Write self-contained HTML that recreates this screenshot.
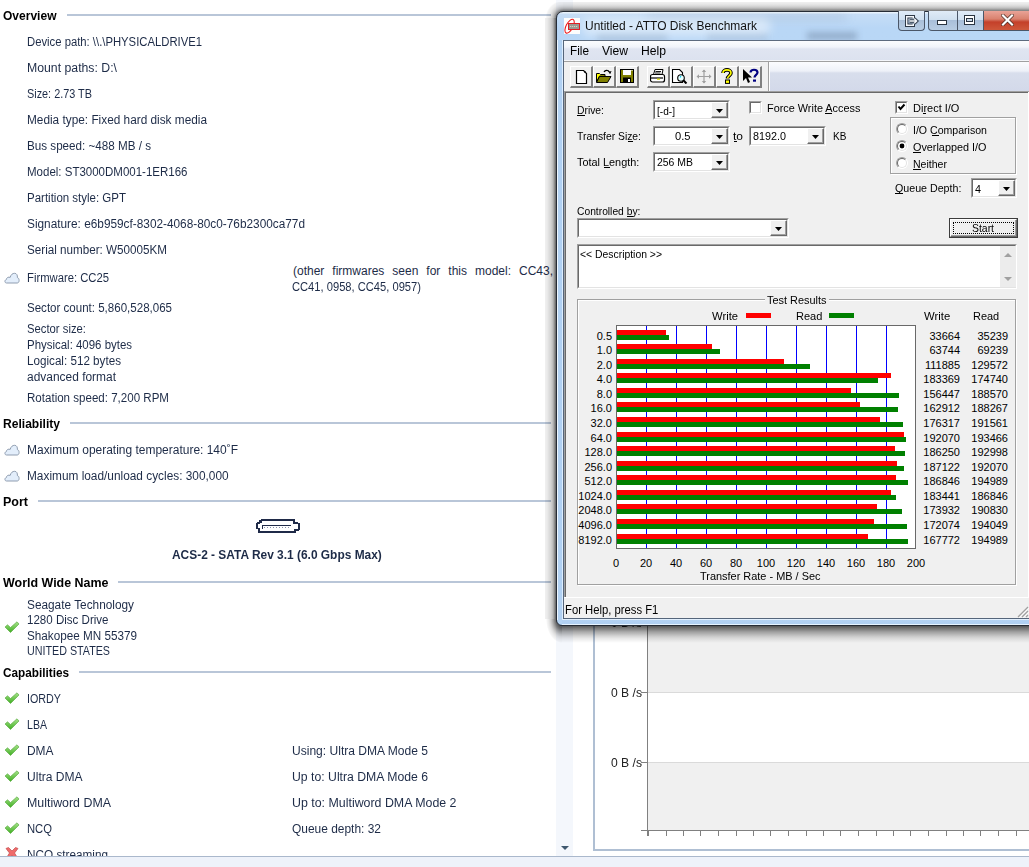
<!DOCTYPE html>
<html><head><meta charset="utf-8">
<style>
html,body{margin:0;padding:0;}
body{width:1029px;height:867px;overflow:hidden;position:relative;background:#fff;font-family:"Liberation Sans",sans-serif;}
.t{position:absolute;white-space:nowrap;font-family:"Liberation Sans",sans-serif;}
.a{position:absolute;}
.hl{position:absolute;height:2px;background:#b9c6d8;}
.combo{position:absolute;background:#fff;border-top:1px solid #a0a0a0;border-left:1px solid #a0a0a0;border-right:1px solid #fff;border-bottom:1px solid #fff;box-sizing:border-box;}
.combo:before{content:"";position:absolute;left:0;top:0;right:0;bottom:0;border-top:1px solid #696969;border-left:1px solid #696969;border-right:1px solid #e3e3e3;border-bottom:1px solid #e3e3e3;}
.dd{position:absolute;top:1px;right:1px;bottom:1px;width:17px;background:#f0f0f0;box-sizing:border-box;border:1px solid;border-color:#fff #696969 #696969 #fff;box-shadow:inset -1px -1px 0 #a0a0a0;}
.dd:after{content:"";position:absolute;left:4px;top:6px;width:7px;height:4px;background:#000;clip-path:polygon(0 0,100% 0,50% 100%);}
.btn{position:absolute;top:66px;width:23px;height:22px;box-sizing:border-box;background:#f0f0f0;border-top:1px solid #fff;border-left:1px solid #fff;border-right:2px solid #808080;border-bottom:2px solid #808080;}
.bar{position:absolute;height:5px;}
.gl{position:absolute;width:1px;background:#0000ff;top:326px;height:222px;}
.radio{position:absolute;width:12px;height:12px;border-radius:50%;box-sizing:border-box;border:1px solid;border-color:#a0a0a0 #fff #fff #a0a0a0;background:#fff;}
.radio:before{content:"";position:absolute;left:0;top:0;right:0;bottom:0;border-radius:50%;border:1px solid;border-color:#696969 #e3e3e3 #e3e3e3 #696969;}
.chk{position:absolute;width:13px;height:13px;box-sizing:border-box;background:#fff;border-top:1px solid #a0a0a0;border-left:1px solid #a0a0a0;border-right:1px solid #fff;border-bottom:1px solid #fff;}
.chk:before{content:"";position:absolute;left:0;top:0;right:0;bottom:0;border-top:1px solid #696969;border-left:1px solid #696969;border-right:1px solid #e3e3e3;border-bottom:1px solid #e3e3e3;}
.ul{position:absolute;height:1px;background:#000;}
</style></head><body>

<!-- ============ LEFT PANEL ============ -->
<div class="hl" style="left:67px;top:14px;width:484px;"></div>
<div class="hl" style="left:70px;top:422px;width:481px;"></div>
<div class="hl" style="left:38px;top:500px;width:513px;"></div>
<div class="hl" style="left:118px;top:581px;width:433px;"></div>
<div class="hl" style="left:79px;top:671px;width:472px;"></div>

<!-- cloud icons -->
<svg class="a" style="left:4px;top:272px" width="16" height="12" viewBox="0 0 16 12"><path d="M2.5 11 C0.6 11 0.3 8.2 2.3 7.6 C2.4 5.6 4.6 4.6 6.2 5.4 C6.8 2.6 8.6 1.3 10.6 1.3 C12.7 1.3 13.6 3.3 13.4 5.6 C15.6 6 15.8 11 13.2 11 Z" fill="#e3eefb" stroke="#8f9db0" stroke-width="1"/></svg>
<svg class="a" style="left:4px;top:444px" width="16" height="12" viewBox="0 0 16 12"><path d="M2.5 11 C0.6 11 0.3 8.2 2.3 7.6 C2.4 5.6 4.6 4.6 6.2 5.4 C6.8 2.6 8.6 1.3 10.6 1.3 C12.7 1.3 13.6 3.3 13.4 5.6 C15.6 6 15.8 11 13.2 11 Z" fill="#e3eefb" stroke="#8f9db0" stroke-width="1"/></svg>
<svg class="a" style="left:4px;top:470px" width="16" height="12" viewBox="0 0 16 12"><path d="M2.5 11 C0.6 11 0.3 8.2 2.3 7.6 C2.4 5.6 4.6 4.6 6.2 5.4 C6.8 2.6 8.6 1.3 10.6 1.3 C12.7 1.3 13.6 3.3 13.4 5.6 C15.6 6 15.8 11 13.2 11 Z" fill="#e3eefb" stroke="#8f9db0" stroke-width="1"/></svg>

<!-- SATA icon -->
<svg class="a" style="left:256px;top:518px" width="46" height="16" viewBox="0 0 46 16" shape-rendering="crispEdges"><g fill="#1f2a48">
<rect x="5" y="1" width="33" height="2"/><rect x="37" y="1" width="2" height="4"/><rect x="37" y="4" width="5" height="2"/><rect x="42" y="5" width="2" height="7"/><rect x="38" y="11" width="5" height="2"/><rect x="38" y="12" width="2" height="3"/>
<rect x="2" y="13" width="38" height="2"/><rect x="2" y="10" width="2" height="5"/><rect x="0" y="5" width="2" height="6"/><rect x="1" y="4" width="3" height="2"/><rect x="3" y="2" width="3" height="3"/>
<rect x="6" y="7" width="29" height="1"/><rect x="6" y="7" width="1" height="4"/></g>
<path d="M8 9.5 H34" stroke="#8890a8" stroke-width="1" stroke-dasharray="1 2"/></svg>

<!-- check icons -->
<svg class="a" style="left:4px;top:621px" width="16" height="13" viewBox="0 0 16 13"><defs><linearGradient id="gck" x1="0" y1="0" x2="0" y2="1"><stop offset="0" stop-color="#a7e48a"/><stop offset="1" stop-color="#3fae22"/></linearGradient></defs><path d="M1 6 L3.5 3.8 L6.5 6.5 L13 0.8 L15 3 L6.5 11.5 Z" fill="url(#gck)" stroke="#52a53a" stroke-width="0.6"/></svg>
<svg class="a" style="left:4px;top:692px" width="16" height="13" viewBox="0 0 16 13"><path d="M1 6 L3.5 3.8 L6.5 6.5 L13 0.8 L15 3 L6.5 11.5 Z" fill="url(#gck)" stroke="#52a53a" stroke-width="0.6"/></svg>
<svg class="a" style="left:4px;top:718px" width="16" height="13" viewBox="0 0 16 13"><path d="M1 6 L3.5 3.8 L6.5 6.5 L13 0.8 L15 3 L6.5 11.5 Z" fill="url(#gck)" stroke="#52a53a" stroke-width="0.6"/></svg>
<svg class="a" style="left:4px;top:744px" width="16" height="13" viewBox="0 0 16 13"><path d="M1 6 L3.5 3.8 L6.5 6.5 L13 0.8 L15 3 L6.5 11.5 Z" fill="url(#gck)" stroke="#52a53a" stroke-width="0.6"/></svg>
<svg class="a" style="left:4px;top:770px" width="16" height="13" viewBox="0 0 16 13"><path d="M1 6 L3.5 3.8 L6.5 6.5 L13 0.8 L15 3 L6.5 11.5 Z" fill="url(#gck)" stroke="#52a53a" stroke-width="0.6"/></svg>
<svg class="a" style="left:4px;top:796px" width="16" height="13" viewBox="0 0 16 13"><path d="M1 6 L3.5 3.8 L6.5 6.5 L13 0.8 L15 3 L6.5 11.5 Z" fill="url(#gck)" stroke="#52a53a" stroke-width="0.6"/></svg>
<svg class="a" style="left:4px;top:822px" width="16" height="13" viewBox="0 0 16 13"><path d="M1 6 L3.5 3.8 L6.5 6.5 L13 0.8 L15 3 L6.5 11.5 Z" fill="url(#gck)" stroke="#52a53a" stroke-width="0.6"/></svg>
<!-- red x -->
<svg class="a" style="left:5px;top:847px" width="14" height="12" viewBox="0 0 14 12"><path d="M1 1.5 L3.5 0.5 L7 4 L10.5 0.5 L13 1.5 L9.5 6 L12 10 L9 11 L7 8 L5 11 L2 10 L4.5 6 Z" fill="#ef6b6b" stroke="#c24b4b" stroke-width="0.7"/></svg>

<!-- scrollbar column -->
<div class="a" style="left:556px;top:0;width:17px;height:856px;background:#f4f7fc;"></div>
<div class="a" style="left:561px;top:846px;width:0;height:0;border-left:4px solid transparent;border-right:4px solid transparent;border-top:4px solid #40596f;"></div>

<!-- graph panel -->
<div class="a" style="left:593px;top:20px;width:2px;height:831px;background:#afbfd3;"></div>
<div class="a" style="left:593px;top:849px;width:436px;height:2px;background:#afbfd3;"></div>
<div class="a" style="left:648px;top:600px;width:381px;height:93px;background:#f0f0f0;"></div>
<div class="a" style="left:648px;top:692px;width:381px;height:1px;background:#dadada;"></div>
<div class="a" style="left:648px;top:762px;width:381px;height:68px;background:#f0f0f0;"></div>
<div class="a" style="left:648px;top:762px;width:381px;height:1px;background:#dadada;"></div>
<div class="a" style="left:647px;top:600px;width:1px;height:236px;background:#808080;"></div>
<div class="a" style="left:641px;top:830px;width:388px;height:1px;background:#808080;"></div>
<div class="a" style="left:641px;top:692px;width:6px;height:1px;background:#808080;"></div>
<div class="a" style="left:641px;top:762px;width:6px;height:1px;background:#808080;"></div>
<div class="a" style="left:641px;top:622px;width:6px;height:1px;background:#808080;"></div>
<div id="ticks"><div class="a" style="left:648px;top:831px;width:1px;height:5px;background:#808080;"></div>
<div class="a" style="left:666px;top:831px;width:1px;height:5px;background:#808080;"></div>
<div class="a" style="left:683px;top:831px;width:1px;height:5px;background:#808080;"></div>
<div class="a" style="left:700px;top:831px;width:1px;height:5px;background:#808080;"></div>
<div class="a" style="left:718px;top:831px;width:1px;height:5px;background:#808080;"></div>
<div class="a" style="left:736px;top:831px;width:1px;height:5px;background:#808080;"></div>
<div class="a" style="left:753px;top:831px;width:1px;height:5px;background:#808080;"></div>
<div class="a" style="left:770px;top:831px;width:1px;height:5px;background:#808080;"></div>
<div class="a" style="left:788px;top:831px;width:1px;height:5px;background:#808080;"></div>
<div class="a" style="left:806px;top:831px;width:1px;height:5px;background:#808080;"></div>
<div class="a" style="left:823px;top:831px;width:1px;height:5px;background:#808080;"></div>
<div class="a" style="left:840px;top:831px;width:1px;height:5px;background:#808080;"></div>
<div class="a" style="left:858px;top:831px;width:1px;height:5px;background:#808080;"></div>
<div class="a" style="left:876px;top:831px;width:1px;height:5px;background:#808080;"></div>
<div class="a" style="left:893px;top:831px;width:1px;height:5px;background:#808080;"></div>
<div class="a" style="left:910px;top:831px;width:1px;height:5px;background:#808080;"></div>
<div class="a" style="left:928px;top:831px;width:1px;height:5px;background:#808080;"></div>
<div class="a" style="left:946px;top:831px;width:1px;height:5px;background:#808080;"></div>
<div class="a" style="left:963px;top:831px;width:1px;height:5px;background:#808080;"></div>
<div class="a" style="left:980px;top:831px;width:1px;height:5px;background:#808080;"></div>
<div class="a" style="left:998px;top:831px;width:1px;height:5px;background:#808080;"></div>
<div class="a" style="left:1016px;top:831px;width:1px;height:5px;background:#808080;"></div></div>

<div class="t" style="top:10px;font-size:12px;line-height:12px;font-weight:bold;color:#000;left:3px;transform:scaleX(1.0023);transform-origin:0 0;">Overview</div>
<div class="t" style="top:36px;font-size:12px;line-height:12px;font-weight:normal;color:#1d2b47;left:27px;transform:scaleX(0.9405);transform-origin:0 0;">Device path: \\.\PHYSICALDRIVE1</div>
<div class="t" style="top:62px;font-size:12px;line-height:12px;font-weight:normal;color:#1d2b47;left:27px;transform:scaleX(1.0222);transform-origin:0 0;">Mount paths: D:\</div>
<div class="t" style="top:88px;font-size:12px;line-height:12px;font-weight:normal;color:#1d2b47;left:27px;transform:scaleX(0.9049);transform-origin:0 0;">Size: 2.73 TB</div>
<div class="t" style="top:114px;font-size:12px;line-height:12px;font-weight:normal;color:#1d2b47;left:27px;transform:scaleX(0.9849);transform-origin:0 0;">Media type: Fixed hard disk media</div>
<div class="t" style="top:140px;font-size:12px;line-height:12px;font-weight:normal;color:#1d2b47;left:27px;transform:scaleX(0.9706);transform-origin:0 0;">Bus speed: ~488 MB / s</div>
<div class="t" style="top:166px;font-size:12px;line-height:12px;font-weight:normal;color:#1d2b47;left:27px;transform:scaleX(0.9586);transform-origin:0 0;">Model: ST3000DM001-1ER166</div>
<div class="t" style="top:192px;font-size:12px;line-height:12px;font-weight:normal;color:#1d2b47;left:27px;transform:scaleX(0.9577);transform-origin:0 0;">Partition style: GPT</div>
<div class="t" style="top:218px;font-size:12px;line-height:12px;font-weight:normal;color:#1d2b47;left:27px;transform:scaleX(0.9850);transform-origin:0 0;">Signature: e6b959cf-8302-4068-80c0-76b2300ca77d</div>
<div class="t" style="top:244px;font-size:12px;line-height:12px;font-weight:normal;color:#1d2b47;left:27px;transform:scaleX(0.9717);transform-origin:0 0;">Serial number: W50005KM</div>
<div class="t" style="top:272px;font-size:12px;line-height:12px;font-weight:normal;color:#1d2b47;left:27px;transform:scaleX(0.9387);transform-origin:0 0;">Firmware: CC25</div>
<div class="t" style="top:265px;font-size:12px;line-height:12px;font-weight:normal;color:#1d2b47;left:293px;width:260px;text-align:justify;text-align-last:justify;">(other firmwares seen for this model: CC43,</div>
<div class="t" style="top:281px;font-size:12px;line-height:12px;font-weight:normal;color:#1d2b47;left:292px;transform:scaleX(0.9297);transform-origin:0 0;">CC41, 0958, CC45, 0957)</div>
<div class="t" style="top:302px;font-size:12px;line-height:12px;font-weight:normal;color:#1d2b47;left:27px;transform:scaleX(0.9617);transform-origin:0 0;">Sector count: 5,860,528,065</div>
<div class="t" style="top:323px;font-size:12px;line-height:12px;font-weight:normal;color:#1d2b47;left:27px;transform:scaleX(0.9409);transform-origin:0 0;">Sector size:</div>
<div class="t" style="top:339px;font-size:12px;line-height:12px;font-weight:normal;color:#1d2b47;left:27px;transform:scaleX(0.9540);transform-origin:0 0;">Physical: 4096 bytes</div>
<div class="t" style="top:355px;font-size:12px;line-height:12px;font-weight:normal;color:#1d2b47;left:27px;transform:scaleX(0.9717);transform-origin:0 0;">Logical: 512 bytes</div>
<div class="t" style="top:371px;font-size:12px;line-height:12px;font-weight:normal;color:#1d2b47;left:27px;transform:scaleX(0.9956);transform-origin:0 0;">advanced format</div>
<div class="t" style="top:392px;font-size:12px;line-height:12px;font-weight:normal;color:#1d2b47;left:27px;transform:scaleX(0.9632);transform-origin:0 0;">Rotation speed: 7,200 RPM</div>
<div class="t" style="top:418px;font-size:12px;line-height:12px;font-weight:bold;color:#000;left:3px;transform:scaleX(1.0055);transform-origin:0 0;">Reliability</div>
<div class="t" style="top:444px;font-size:12px;line-height:12px;font-weight:normal;color:#1d2b47;left:27px;transform:scaleX(0.9979);transform-origin:0 0;">Maximum operating temperature: 140˚F</div>
<div class="t" style="top:470px;font-size:12px;line-height:12px;font-weight:normal;color:#1d2b47;left:27px;transform:scaleX(0.9876);transform-origin:0 0;">Maximum load/unload cycles: 300,000</div>
<div class="t" style="top:496px;font-size:12px;line-height:12px;font-weight:bold;color:#000;left:3px;transform:scaleX(1.0417);transform-origin:0 0;">Port</div>
<div class="t" style="top:549px;font-size:12px;line-height:12px;font-weight:bold;color:#1d2b47;left:172px;transform:scaleX(0.9935);transform-origin:0 0;">ACS-2 - SATA Rev 3.1 (6.0 Gbps Max)</div>
<div class="t" style="top:577px;font-size:12px;line-height:12px;font-weight:bold;color:#000;left:3px;transform:scaleX(1.0375);transform-origin:0 0;">World Wide Name</div>
<div class="t" style="top:599px;font-size:12px;line-height:12px;font-weight:normal;color:#1d2b47;left:27px;transform:scaleX(0.9857);transform-origin:0 0;">Seagate Technology</div>
<div class="t" style="top:614px;font-size:12px;line-height:12px;font-weight:normal;color:#1d2b47;left:27px;transform:scaleX(0.9622);transform-origin:0 0;">1280 Disc Drive</div>
<div class="t" style="top:630px;font-size:12px;line-height:12px;font-weight:normal;color:#1d2b47;left:27px;transform:scaleX(0.9756);transform-origin:0 0;">Shakopee MN 55379</div>
<div class="t" style="top:645px;font-size:12px;line-height:12px;font-weight:normal;color:#1d2b47;left:27px;transform:scaleX(0.8934);transform-origin:0 0;">UNITED STATES</div>
<div class="t" style="top:667px;font-size:12px;line-height:12px;font-weight:bold;color:#000;left:3px;transform:scaleX(0.9798);transform-origin:0 0;">Capabilities</div>
<div class="t" style="top:693px;font-size:12px;line-height:12px;font-weight:normal;color:#1d2b47;left:27px;transform:scaleX(0.8944);transform-origin:0 0;">IORDY</div>
<div class="t" style="top:719px;font-size:12px;line-height:12px;font-weight:normal;color:#1d2b47;left:27px;transform:scaleX(0.8815);transform-origin:0 0;">LBA</div>
<div class="t" style="top:745px;font-size:12px;line-height:12px;font-weight:normal;color:#1d2b47;left:27px;transform:scaleX(0.9936);transform-origin:0 0;">DMA</div>
<div class="t" style="top:771px;font-size:12px;line-height:12px;font-weight:normal;color:#1d2b47;left:27px;transform:scaleX(1.0046);transform-origin:0 0;">Ultra DMA</div>
<div class="t" style="top:797px;font-size:12px;line-height:12px;font-weight:normal;color:#1d2b47;left:27px;transform:scaleX(1.0325);transform-origin:0 0;">Multiword DMA</div>
<div class="t" style="top:823px;font-size:12px;line-height:12px;font-weight:normal;color:#1d2b47;left:27px;transform:scaleX(0.9373);transform-origin:0 0;">NCQ</div>
<div class="t" style="top:849px;font-size:12px;line-height:12px;font-weight:normal;color:#1d2b47;left:27px;transform:scaleX(0.9796);transform-origin:0 0;">NCQ streaming</div>
<div class="t" style="top:745px;font-size:12px;line-height:12px;font-weight:normal;color:#1d2b47;left:292px;transform:scaleX(1.0045);transform-origin:0 0;">Using: Ultra DMA Mode 5</div>
<div class="t" style="top:771px;font-size:12px;line-height:12px;font-weight:normal;color:#1d2b47;left:292px;transform:scaleX(1.0196);transform-origin:0 0;">Up to: Ultra DMA Mode 6</div>
<div class="t" style="top:797px;font-size:12px;line-height:12px;font-weight:normal;color:#1d2b47;left:292px;transform:scaleX(1.0320);transform-origin:0 0;">Up to: Multiword DMA Mode 2</div>
<div class="t" style="top:823px;font-size:12px;line-height:12px;font-weight:normal;color:#1d2b47;left:292px;transform:scaleX(0.9953);transform-origin:0 0;">Queue depth: 32</div>
<div class="t" style="top:687px;font-size:12px;line-height:12px;font-weight:normal;color:#222;left:611px;transform:scaleX(1.0102);transform-origin:0 0;">0 B /s</div>
<div class="t" style="top:757px;font-size:12px;line-height:12px;font-weight:normal;color:#222;left:611px;transform:scaleX(1.0102);transform-origin:0 0;">0 B /s</div>
<div class="t" style="top:617px;font-size:12px;line-height:12px;font-weight:normal;color:#222;left:611px;transform:scaleX(1.0102);transform-origin:0 0;">0 B /s</div>
<!-- bottom bar -->
<div class="a" style="left:0;top:856px;width:1029px;height:1px;background:#aab8cc;"></div>
<div class="a" style="left:0;top:857px;width:1029px;height:10px;background:#eef2fa;"></div>

<!-- ============ ATTO WINDOW ============ -->
<div class="a" style="left:563px;top:2px;width:466px;height:9px;background:linear-gradient(180deg,rgba(0,0,0,.06) 0,rgba(0,0,0,.09) 22%,rgba(0,0,0,.15) 44%,rgba(0,0,0,.25) 67%,rgba(0,0,0,.34) 78%,rgba(0,0,0,.44) 89%,rgba(0,0,0,.5) 100%);"></div>
<div class="a" style="left:545px;top:18px;width:11px;height:601px;background:linear-gradient(90deg,rgba(0,0,0,.06) 0,rgba(0,0,0,.08) 18%,rgba(0,0,0,.18) 55%,rgba(0,0,0,.28) 73%,rgba(0,0,0,.44) 86%,rgba(0,0,0,.56) 95%,rgba(0,0,0,.6) 100%);"></div>
<div class="a" style="left:562px;top:626px;width:467px;height:17px;background:linear-gradient(180deg,rgba(0,0,0,.65) 0,rgba(0,0,0,.53) 12%,rgba(0,0,0,.43) 24%,rgba(0,0,0,.33) 35%,rgba(0,0,0,.25) 47%,rgba(0,0,0,.17) 59%,rgba(0,0,0,.1) 71%,rgba(0,0,0,.06) 82%,rgba(0,0,0,0) 100%);"></div>
<div class="a" style="left:545px;top:2px;width:18px;height:16px;background:radial-gradient(circle at 18px 16px,rgba(0,0,0,.5) 7px,rgba(0,0,0,.42) 8px,rgba(0,0,0,.32) 9px,rgba(0,0,0,.24) 10px,rgba(0,0,0,.14) 12px,rgba(0,0,0,.08) 14px,rgba(0,0,0,.05) 16px,rgba(0,0,0,0) 17.5px);"></div>
<div class="a" style="left:545px;top:619px;width:17px;height:24px;background:radial-gradient(ellipse 16px 24px at 17px 0px,rgba(0,0,0,.62) 0,rgba(0,0,0,.62) 35%,rgba(0,0,0,.5) 45%,rgba(0,0,0,.36) 55%,rgba(0,0,0,.24) 65%,rgba(0,0,0,.14) 75%,rgba(0,0,0,.08) 85%,rgba(0,0,0,.04) 94%,rgba(0,0,0,0) 100%);"></div>
<div class="a" style="left:556px;top:11px;width:500px;height:615px;border-radius:7px 7px 6px 6px;background:linear-gradient(180deg,#e8f2fc 0px,#e8f2fc 1px,#c6ddf6 2px,#b9d7f6 16px,#b5d4f4 100%);border:1px solid #262c36;box-sizing:border-box;overflow:hidden;">
  <!-- blurry background patches seen through glass -->
  <div class="a" style="left:40px;top:22px;width:70px;height:6px;background:rgba(90,110,140,0.28);filter:blur(3px);"></div>
  <div class="a" style="left:150px;top:21px;width:60px;height:7px;background:rgba(90,110,140,0.22);filter:blur(3px);"></div>
  <div class="a" style="left:250px;top:20px;width:50px;height:8px;background:rgba(80,100,130,0.35);filter:blur(3px);"></div>
  <div class="a" style="left:90px;top:1px;width:200px;height:8px;background:rgba(90,110,140,0.12);filter:blur(4px);"></div>
  <div class="a" style="left:24px;top:6px;width:190px;height:18px;border-radius:9px;background:rgba(255,255,255,0.45);filter:blur(5px);"></div>
</div>
<!-- title icon -->
<svg class="a" style="left:564px;top:18px" width="16" height="16" viewBox="0 0 16 16"><rect x="0" y="0" width="16" height="16" fill="#fdfdfd"/><ellipse cx="5.6" cy="8.2" rx="3.4" ry="7.6" transform="rotate(28 5.6 8.2)" fill="none" stroke="#ee1c1c" stroke-width="1.1"/><rect x="4" y="5" width="12" height="7" fill="#e01e24"/><rect x="5" y="6" width="10" height="5" fill="#9a9890"/><path d="M6 8.5 H14" stroke="#d8d0c0" stroke-width="1.2" stroke-dasharray="1.2 0.8"/></svg>

<!-- caption buttons -->
<div class="a" style="left:898px;top:11px;width:27px;height:20px;box-sizing:border-box;border:1px solid #4a5668;border-top:none;border-radius:0 0 4px 4px;background:linear-gradient(180deg,#e0ebf7 0,#d0e0f0 45%,#a9bfd9 50%,#b8cde3 100%);"></div>
<svg class="a" style="left:905px;top:15px" width="14" height="12" viewBox="0 0 14 12"><g fill="none" stroke="#2e3846" stroke-width="3.4"><path d="M8.3 3.2 V1.7 H1.7 V10.3 H8.3 V8.8"/><path d="M4.5 6 H11 M9.3 3.8 L11.6 6 L9.3 8.2"/></g><g fill="none" stroke="#f4f7fb" stroke-width="1.4"><path d="M8.3 3.2 V1.7 H1.7 V10.3 H8.3 V8.8"/><path d="M4.5 6 H11 M9.3 3.8 L11.6 6 L9.3 8.2"/></g></svg>
<div class="a" style="left:928px;top:11px;width:110px;height:20px;box-sizing:border-box;border:1px solid #4a5668;border-top:none;border-radius:0 0 4px 4px;overflow:hidden;background:linear-gradient(180deg,#e0ebf7 0,#d0e0f0 45%,#a9bfd9 50%,#b8cde3 100%);">
  <div class="a" style="left:28px;top:0;width:1px;height:20px;background:#4a5668;"></div>
  <div class="a" style="left:54px;top:0;width:1px;height:20px;background:#4a5668;"></div>
  <div class="a" style="left:55px;top:0;width:60px;height:20px;background:linear-gradient(180deg,#e9a397 0,#d9826f 40%,#c4402a 55%,#cf5a3c 100%);"></div>
</div>
<div class="a" style="left:937px;top:20px;width:10px;height:5px;box-sizing:border-box;background:#fff;border:1px solid #2a3440;"></div>
<div class="a" style="left:964px;top:15px;width:11px;height:10px;box-sizing:border-box;background:#fff;border:1px solid #2a3440;"></div>
<div class="a" style="left:966px;top:18px;width:7px;height:4px;box-sizing:border-box;background:#c9d8e8;border:1px solid #2a3440;"></div>
<svg class="a" style="left:1001px;top:14px" width="13" height="12" viewBox="0 0 13 12"><path d="M2 1.5 L11 10.5 M11 1.5 L2 10.5" stroke="#4a2a20" stroke-width="3.6" stroke-linecap="square"/><path d="M2 1.5 L11 10.5 M11 1.5 L2 10.5" stroke="#fff" stroke-width="2.2" stroke-linecap="square"/></svg>

<!-- menu bar -->
<div class="a" style="left:563px;top:40px;width:466px;height:1px;background:#5d6b7e;"></div>
<div class="a" style="left:564px;top:41px;width:465px;height:19px;background:linear-gradient(180deg,#fbfcfe 0,#f1f4fa 6px,#e0e5f1 8px,#dce2ef 100%);"></div>
<div class="a" style="left:564px;top:60px;width:465px;height:1px;background:#f4f6fa;"></div>
<div class="a" style="left:564px;top:61px;width:465px;height:1px;background:#a0a0a0;"></div>
<!-- toolbar -->
<div class="a" style="left:564px;top:62px;width:465px;height:29px;background:linear-gradient(180deg,#fbfcfe 0,#eef1f8 9px,#d8deec 11px,#d3d9ea 100%);"></div>
<div class="a" style="left:564px;top:62px;width:204px;height:29px;background:#f0f0f0;"></div>
<div class="a" style="left:768px;top:62px;width:1px;height:29px;background:#a0a0a0;"></div>
<div class="a" style="left:769px;top:62px;width:1px;height:29px;background:#fff;"></div>
<div class="a" style="left:564px;top:91px;width:465px;height:1px;background:#a0a0a0;"></div>
<div class="a" style="left:564px;top:92px;width:465px;height:1px;background:#696969;"></div>

<!-- toolbar buttons -->
<div class="btn" style="left:570px;"></div>
<div class="btn" style="left:593px;"></div>
<div class="btn" style="left:616px;"></div>
<div class="btn" style="left:647px;"></div>
<div class="btn" style="left:670px;"></div>
<div class="btn" style="left:693px;"></div>
<div class="btn" style="left:716px;"></div>
<div class="btn" style="left:739px;"></div>
<!-- icons -->
<svg class="a" style="left:575px;top:70px" width="13" height="14" viewBox="0 0 13 14"><path d="M1.5 0.5 H8.5 L11.5 3.5 V13.5 H1.5 Z" fill="#fff" stroke="#000" stroke-width="1.2"/><rect x="9" y="1" width="1.5" height="1.5" fill="#000"/></svg>
<svg class="a" style="left:596px;top:69px" width="16" height="14" viewBox="0 0 16 14"><path d="M8 3 C9 1 12 0.5 13.5 3" fill="none" stroke="#000" stroke-width="1.2"/><path d="M12.5 2 L14 4.5 L15 2" fill="none" stroke="#000" stroke-width="1"/><path d="M0.5 4.5 H3.5 L4.5 5.5 H9 V7 H3.5 L0.5 13 Z" fill="#ffff00" stroke="#000" stroke-width="1"/><path d="M0.5 13.5 L3.5 7.5 H15 L11.5 13.5 Z" fill="#808000" stroke="#000" stroke-width="1"/></svg>
<svg class="a" style="left:620px;top:69px" width="14" height="14" viewBox="0 0 14 14"><rect x="0.5" y="0.5" width="13" height="13" fill="#808000" stroke="#000"/><rect x="3" y="1" width="8" height="5" fill="#fff"/><rect x="3" y="8.5" width="8" height="5" fill="#000"/><rect x="8" y="10" width="2" height="3" fill="#fff"/><rect x="11.5" y="1" width="1" height="1" fill="#fff"/></svg>
<svg class="a" style="left:650px;top:69px" width="16" height="14" viewBox="0 0 16 14"><path d="M3.5 5.5 L5 0.5 H13 L12 5.5" fill="#fff" stroke="#000" stroke-width="1"/><path d="M5.5 2.5 H11 M5 4 H10.5" stroke="#000" stroke-width="0.9"/><rect x="0.5" y="5.5" width="14" height="7.5" rx="2" fill="#fff" stroke="#000" stroke-width="1.2"/><path d="M1 9 H13" stroke="#000" stroke-width="1.2"/><rect x="7" y="9.6" width="3" height="1.2" fill="#e0e000"/></svg>
<svg class="a" style="left:672px;top:69px" width="16" height="15" viewBox="0 0 16 15"><path d="M0.5 0.5 H7.5 L10.5 3.5 V13.5 H0.5 Z" fill="#fff" stroke="#000" stroke-width="1.1"/><circle cx="9" cy="9" r="3.3" fill="#e8ffff" stroke="#000" stroke-width="1.1"/><path d="M8 7.5 L9 8" stroke="#00d0f0" stroke-width="1.4"/><path d="M11.3 11.3 L14.5 14.5" stroke="#000" stroke-width="2"/></svg>
<svg class="a" style="left:696px;top:69px" width="16" height="15" viewBox="0 0 16 15"><path d="M8 1 V14 M1.5 7.5 H14.5" stroke="#a0a0a0" stroke-width="1.2"/><path d="M8 0.5 L5.8 3 H10.2 Z M8 14.5 L5.8 12 H10.2 Z M0.5 7.5 L3 5.3 V9.7 Z M15.5 7.5 L13 5.3 V9.7 Z" fill="#a0a0a0"/></svg>
<svg class="a" style="left:721px;top:68px" width="12" height="16" viewBox="0 0 12 16"><path d="M2 5 C2 0.8 10 0.8 10 5 C10 7.5 6.5 8 6.5 10.5" fill="none" stroke="#000" stroke-width="3.6"/><path d="M2 5 C2 0.8 10 0.8 10 5 C10 7.5 6.5 8 6.5 10.5" fill="none" stroke="#ffff00" stroke-width="1.6"/><rect x="4.5" y="12" width="4" height="3.4" fill="#ffff00" stroke="#000" stroke-width="1"/></svg>
<svg class="a" style="left:742px;top:68px" width="17" height="16" viewBox="0 0 17 16"><path d="M1 1 V13 L4 10 L6 15 L8 14 L6 9.5 H10 Z" fill="#000"/><path d="M8.5 4.5 C8.5 0.8 15.5 0.8 15.5 4.5 C15.5 6.8 12.5 7 12.5 9.5" fill="none" stroke="#000080" stroke-width="2.2"/><rect x="11" y="11.5" width="3" height="2.2" fill="#000080"/></svg>

<!-- client area -->
<div class="a" style="left:564px;top:93px;width:465px;height:504px;background:#f0f0f0;"></div>
<div class="a" style="left:564px;top:91px;width:1px;height:506px;background:#a0a0a0;"></div>
<div class="a" style="left:565px;top:92px;width:1px;height:505px;background:#696969;"></div>
<div class="a" style="left:1028px;top:92px;width:1px;height:505px;background:#fff;"></div>

<!-- combos -->
<div class="combo" style="left:653px;top:100px;width:77px;height:20px;"><div class="dd"></div></div>
<div class="combo" style="left:653px;top:126px;width:77px;height:20px;"><div class="dd"></div></div>
<div class="combo" style="left:653px;top:152px;width:77px;height:20px;"><div class="dd"></div></div>
<div class="combo" style="left:749px;top:126px;width:77px;height:20px;"><div class="dd"></div></div>
<div class="combo" style="left:971px;top:178px;width:46px;height:20px;"><div class="dd"></div></div>
<div class="combo" style="left:577px;top:218px;width:212px;height:20px;"><div class="dd"></div></div>
<!-- checkboxes -->
<div class="chk" style="left:749px;top:101px;"></div>
<div class="chk" style="left:895px;top:101px;"></div>
<svg class="a" style="left:897px;top:103px" width="9" height="9" viewBox="0 0 9 9"><path d="M1.5 3.5 L3.5 6 L7.5 1.5" fill="none" stroke="#000" stroke-width="2"/></svg>
<!-- groupbox radios -->
<div class="a" style="left:890px;top:117px;width:126px;height:57px;box-sizing:border-box;border:1px solid #a0a0a0;"></div>
<div class="a" style="left:891px;top:118px;width:126px;height:57px;box-sizing:border-box;border-right:1px solid #fff;border-bottom:1px solid #fff;"></div>
<div class="a" style="left:891px;top:118px;width:124px;height:55px;box-sizing:border-box;border-left:1px solid #fff;border-top:1px solid #fff;"></div>
<div class="radio" style="left:896px;top:123px;"></div>
<div class="radio" style="left:896px;top:140px;"></div>
<div class="a" style="left:900px;top:144px;width:4px;height:4px;background:#000;border-radius:50%;box-shadow:0 0 0 0.4px #000;"></div>
<div class="radio" style="left:896px;top:157px;"></div>

<!-- start button -->
<div class="a" style="left:949px;top:218px;width:69px;height:20px;box-sizing:border-box;border:1px solid #3c3c3c;background:#f0f0f0;"></div>
<div class="a" style="left:950px;top:219px;width:67px;height:18px;box-sizing:border-box;border-top:1px solid #fff;border-left:1px solid #fff;border-right:1px solid #696969;border-bottom:1px solid #696969;"></div>
<div class="a" style="left:951px;top:220px;width:65px;height:16px;box-sizing:border-box;border-right:1px solid #a0a0a0;border-bottom:1px solid #a0a0a0;"></div>
<div class="a" style="left:953px;top:222px;width:61px;height:12px;box-sizing:border-box;border:1px dotted #000;"></div>

<!-- description edit -->
<div class="combo" style="left:577px;top:244px;width:440px;height:45px;"></div>
<div class="a" style="left:1000px;top:246px;width:16px;height:41px;background:#ececec;"></div>
<div class="a" style="left:1004px;top:253px;width:0;height:0;border-left:4px solid transparent;border-right:4px solid transparent;border-bottom:4px solid #a0a0a0;"></div>
<div class="a" style="left:1004px;top:277px;width:0;height:0;border-left:4px solid transparent;border-right:4px solid transparent;border-top:4px solid #a0a0a0;"></div>

<!-- test results groupbox -->
<div class="a" style="left:577px;top:299px;width:439px;height:286px;box-sizing:border-box;border:1px solid #a0a0a0;"></div>
<div class="a" style="left:578px;top:300px;width:439px;height:286px;box-sizing:border-box;border-right:1px solid #fff;border-bottom:1px solid #fff;"></div>
<div class="a" style="left:578px;top:300px;width:437px;height:284px;box-sizing:border-box;border-left:1px solid #fff;border-top:1px solid #fff;"></div>
<div class="a" style="left:765px;top:295px;width:64px;height:10px;background:#f0f0f0;"></div>
<div class="a" style="left:746px;top:313px;width:25px;height:5px;background:#ff0000;"></div>
<div class="a" style="left:829px;top:313px;width:25px;height:5px;background:#008000;"></div>

<!-- chart -->
<div class="a" style="left:616px;top:325px;width:300px;height:224px;box-sizing:border-box;background:#fff;border:1px solid #696969;"></div>
<div class="gl" style="left:646px;"></div>
<div class="gl" style="left:676px;"></div>
<div class="gl" style="left:706px;"></div>
<div class="gl" style="left:736px;"></div>
<div class="gl" style="left:766px;"></div>
<div class="gl" style="left:796px;"></div>
<div class="gl" style="left:826px;"></div>
<div class="gl" style="left:856px;"></div>
<div class="gl" style="left:886px;"></div>
<div class="bar" style="left:617px;top:330px;width:49px;background:#ff0000;"></div>
<div class="bar" style="left:617px;top:335px;width:52px;background:#008000;"></div>
<div class="bar" style="left:617px;top:344px;width:95px;background:#ff0000;"></div>
<div class="bar" style="left:617px;top:349px;width:103px;background:#008000;"></div>
<div class="bar" style="left:617px;top:359px;width:167px;background:#ff0000;"></div>
<div class="bar" style="left:617px;top:364px;width:193px;background:#008000;"></div>
<div class="bar" style="left:617px;top:373px;width:274px;background:#ff0000;"></div>
<div class="bar" style="left:617px;top:378px;width:261px;background:#008000;"></div>
<div class="bar" style="left:617px;top:388px;width:234px;background:#ff0000;"></div>
<div class="bar" style="left:617px;top:393px;width:282px;background:#008000;"></div>
<div class="bar" style="left:617px;top:402px;width:243px;background:#ff0000;"></div>
<div class="bar" style="left:617px;top:407px;width:281px;background:#008000;"></div>
<div class="bar" style="left:617px;top:417px;width:263px;background:#ff0000;"></div>
<div class="bar" style="left:617px;top:422px;width:286px;background:#008000;"></div>
<div class="bar" style="left:617px;top:432px;width:287px;background:#ff0000;"></div>
<div class="bar" style="left:617px;top:437px;width:289px;background:#008000;"></div>
<div class="bar" style="left:617px;top:446px;width:278px;background:#ff0000;"></div>
<div class="bar" style="left:617px;top:451px;width:288px;background:#008000;"></div>
<div class="bar" style="left:617px;top:461px;width:280px;background:#ff0000;"></div>
<div class="bar" style="left:617px;top:466px;width:287px;background:#008000;"></div>
<div class="bar" style="left:617px;top:475px;width:279px;background:#ff0000;"></div>
<div class="bar" style="left:617px;top:480px;width:291px;background:#008000;"></div>
<div class="bar" style="left:617px;top:490px;width:274px;background:#ff0000;"></div>
<div class="bar" style="left:617px;top:495px;width:279px;background:#008000;"></div>
<div class="bar" style="left:617px;top:504px;width:260px;background:#ff0000;"></div>
<div class="bar" style="left:617px;top:509px;width:285px;background:#008000;"></div>
<div class="bar" style="left:617px;top:519px;width:257px;background:#ff0000;"></div>
<div class="bar" style="left:617px;top:524px;width:290px;background:#008000;"></div>
<div class="bar" style="left:617px;top:534px;width:251px;background:#ff0000;"></div>
<div class="bar" style="left:617px;top:539px;width:291px;background:#008000;"></div>

<!-- status bar -->
<div class="a" style="left:564px;top:597px;width:465px;height:1px;background:#fff;"></div>
<div class="a" style="left:564px;top:598px;width:465px;height:20px;background:#f0f0f0;"></div>
<svg class="a" style="left:1016px;top:605px" width="13" height="13" viewBox="0 0 13 13"><path d="M12 2 L2 12 M12 6 L6 12 M12 10 L10 12" stroke="#a0a0a0" stroke-width="1.2"/><path d="M13 3 L3 13 M13 7 L7 13" stroke="#fff" stroke-width="0.8"/></svg>
<div class="a" style="left:563px;top:618px;width:466px;height:1px;background:#55657a;"></div>
<div class="a" style="left:562px;top:619px;width:467px;height:6px;background:linear-gradient(180deg,#e2f0fe 0,#e2f0fe 1px,#b3d2f3 1px,#b0d0f2 5px,#e6f3ff 5px);"></div>
<div class="a" style="left:557px;top:40px;width:6px;height:580px;background:linear-gradient(90deg,#eef6fe 0,#eef6fe 1px,#b3d2f3 1px,#b0d0f2 5px,#dcedff 5px);"></div>
<div class="a" style="left:563px;top:40px;width:1px;height:579px;background:#55657a;"></div>

<div class="t" style="top:20px;font-size:12px;line-height:12px;font-weight:normal;color:#111;left:585px;transform:scaleX(0.9984);transform-origin:0 0;">Untitled - ATTO Disk Benchmark</div>
<div class="t" style="top:45px;font-size:12px;line-height:12px;font-weight:normal;color:#000;left:570px;transform:scaleX(0.9822);transform-origin:0 0;">File</div>
<div class="t" style="top:45px;font-size:12px;line-height:12px;font-weight:normal;color:#000;left:602px;transform:scaleX(1.0079);transform-origin:0 0;">View</div>
<div class="t" style="top:45px;font-size:12px;line-height:12px;font-weight:normal;color:#000;left:641px;transform:scaleX(1.0127);transform-origin:0 0;">Help</div>
<div class="t" style="top:105px;font-size:11px;line-height:11px;font-weight:normal;color:#000;left:577px;transform:scaleX(0.9396);transform-origin:0 0;">Drive:</div>
<div class="t" style="top:131px;font-size:11px;line-height:11px;font-weight:normal;color:#000;left:577px;transform:scaleX(0.9403);transform-origin:0 0;">Transfer Size:</div>
<div class="t" style="top:157px;font-size:11px;line-height:11px;font-weight:normal;color:#000;left:577px;transform:scaleX(0.9889);transform-origin:0 0;">Total Length:</div>
<div class="t" style="top:106px;font-size:11px;line-height:11px;font-weight:normal;color:#000;left:657px;transform:scaleX(0.9201);transform-origin:0 0;">[-d-]</div>
<div class="t" style="top:131px;font-size:11px;line-height:11px;font-weight:normal;color:#000;left:675px;transform:scaleX(1.0133);transform-origin:0 0;">0.5</div>
<div class="t" style="top:157px;font-size:11px;line-height:11px;font-weight:normal;color:#000;left:657px;transform:scaleX(0.9493);transform-origin:0 0;">256 MB</div>
<div class="t" style="top:131px;font-size:11px;line-height:11px;font-weight:normal;color:#000;left:733px;transform:scaleX(1.0884);transform-origin:0 0;">to</div>
<div class="t" style="top:131px;font-size:11px;line-height:11px;font-weight:normal;color:#000;left:753px;transform:scaleX(0.9805);transform-origin:0 0;">8192.0</div>
<div class="t" style="top:131px;font-size:11px;line-height:11px;font-weight:normal;color:#000;left:833px;transform:scaleX(0.9123);transform-origin:0 0;">KB</div>
<div class="t" style="top:103px;font-size:11px;line-height:11px;font-weight:normal;color:#000;left:767px;transform:scaleX(0.9879);transform-origin:0 0;">Force Write Access</div>
<div class="t" style="top:103px;font-size:11px;line-height:11px;font-weight:normal;color:#000;left:913px;transform:scaleX(0.9989);transform-origin:0 0;">Direct I/O</div>
<div class="t" style="top:125px;font-size:11px;line-height:11px;font-weight:normal;color:#000;left:913px;transform:scaleX(0.9606);transform-origin:0 0;">I/O Comparison</div>
<div class="t" style="top:142px;font-size:11px;line-height:11px;font-weight:normal;color:#000;left:913px;transform:scaleX(0.9840);transform-origin:0 0;">Overlapped I/O</div>
<div class="t" style="top:159px;font-size:11px;line-height:11px;font-weight:normal;color:#000;left:913px;transform:scaleX(0.9586);transform-origin:0 0;">Neither</div>
<div class="t" style="top:183px;font-size:11px;line-height:11px;font-weight:normal;color:#000;left:895px;transform:scaleX(0.9693);transform-origin:0 0;">Queue Depth:</div>
<div class="t" style="top:184px;font-size:11px;line-height:11px;font-weight:normal;color:#000;left:975px;transform:scaleX(0.9796);transform-origin:0 0;">4</div>
<div class="t" style="top:206px;font-size:11px;line-height:11px;font-weight:normal;color:#000;left:577px;transform:scaleX(0.9341);transform-origin:0 0;">Controlled by:</div>
<div class="t" style="top:223px;font-size:11px;line-height:11px;font-weight:normal;color:#000;left:972px;transform:scaleX(0.9469);transform-origin:0 0;">Start</div>
<div class="t" style="top:249px;font-size:11px;line-height:11px;font-weight:normal;color:#000;left:580px;transform:scaleX(0.9442);transform-origin:0 0;">&lt;&lt; Description &gt;&gt;</div>
<div class="t" style="top:295px;font-size:11px;line-height:11px;font-weight:normal;color:#000;left:767px;transform:scaleX(0.9913);transform-origin:0 0;">Test Results</div>
<div class="t" style="top:311px;font-size:11px;line-height:11px;font-weight:normal;color:#000;left:712px;transform:scaleX(1.0209);transform-origin:0 0;">Write</div>
<div class="t" style="top:311px;font-size:11px;line-height:11px;font-weight:normal;color:#000;left:796px;transform:scaleX(1.0039);transform-origin:0 0;">Read</div>
<div class="t" style="top:311px;font-size:11px;line-height:11px;font-weight:normal;color:#000;left:924px;transform:scaleX(1.0287);transform-origin:0 0;">Write</div>
<div class="t" style="top:311px;font-size:11px;line-height:11px;font-weight:normal;color:#000;left:973px;transform:scaleX(0.9963);transform-origin:0 0;">Read</div>
<div class="t" style="top:331px;font-size:11px;line-height:11px;font-weight:normal;color:#000;right:417px;">0.5</div>
<div class="t" style="top:331px;font-size:11px;line-height:11px;font-weight:normal;color:#000;right:69px;">33664</div>
<div class="t" style="top:331px;font-size:11px;line-height:11px;font-weight:normal;color:#000;right:21px;">35239</div>
<div class="t" style="top:345px;font-size:11px;line-height:11px;font-weight:normal;color:#000;right:417px;">1.0</div>
<div class="t" style="top:345px;font-size:11px;line-height:11px;font-weight:normal;color:#000;right:69px;">63744</div>
<div class="t" style="top:345px;font-size:11px;line-height:11px;font-weight:normal;color:#000;right:21px;">69239</div>
<div class="t" style="top:360px;font-size:11px;line-height:11px;font-weight:normal;color:#000;right:417px;">2.0</div>
<div class="t" style="top:360px;font-size:11px;line-height:11px;font-weight:normal;color:#000;right:69px;">111885</div>
<div class="t" style="top:360px;font-size:11px;line-height:11px;font-weight:normal;color:#000;right:21px;">129572</div>
<div class="t" style="top:374px;font-size:11px;line-height:11px;font-weight:normal;color:#000;right:417px;">4.0</div>
<div class="t" style="top:374px;font-size:11px;line-height:11px;font-weight:normal;color:#000;right:69px;">183369</div>
<div class="t" style="top:374px;font-size:11px;line-height:11px;font-weight:normal;color:#000;right:21px;">174740</div>
<div class="t" style="top:389px;font-size:11px;line-height:11px;font-weight:normal;color:#000;right:417px;">8.0</div>
<div class="t" style="top:389px;font-size:11px;line-height:11px;font-weight:normal;color:#000;right:69px;">156447</div>
<div class="t" style="top:389px;font-size:11px;line-height:11px;font-weight:normal;color:#000;right:21px;">188570</div>
<div class="t" style="top:403px;font-size:11px;line-height:11px;font-weight:normal;color:#000;right:417px;">16.0</div>
<div class="t" style="top:403px;font-size:11px;line-height:11px;font-weight:normal;color:#000;right:69px;">162912</div>
<div class="t" style="top:403px;font-size:11px;line-height:11px;font-weight:normal;color:#000;right:21px;">188267</div>
<div class="t" style="top:418px;font-size:11px;line-height:11px;font-weight:normal;color:#000;right:417px;">32.0</div>
<div class="t" style="top:418px;font-size:11px;line-height:11px;font-weight:normal;color:#000;right:69px;">176317</div>
<div class="t" style="top:418px;font-size:11px;line-height:11px;font-weight:normal;color:#000;right:21px;">191561</div>
<div class="t" style="top:433px;font-size:11px;line-height:11px;font-weight:normal;color:#000;right:417px;">64.0</div>
<div class="t" style="top:433px;font-size:11px;line-height:11px;font-weight:normal;color:#000;right:69px;">192070</div>
<div class="t" style="top:433px;font-size:11px;line-height:11px;font-weight:normal;color:#000;right:21px;">193466</div>
<div class="t" style="top:447px;font-size:11px;line-height:11px;font-weight:normal;color:#000;right:417px;">128.0</div>
<div class="t" style="top:447px;font-size:11px;line-height:11px;font-weight:normal;color:#000;right:69px;">186250</div>
<div class="t" style="top:447px;font-size:11px;line-height:11px;font-weight:normal;color:#000;right:21px;">192998</div>
<div class="t" style="top:462px;font-size:11px;line-height:11px;font-weight:normal;color:#000;right:417px;">256.0</div>
<div class="t" style="top:462px;font-size:11px;line-height:11px;font-weight:normal;color:#000;right:69px;">187122</div>
<div class="t" style="top:462px;font-size:11px;line-height:11px;font-weight:normal;color:#000;right:21px;">192070</div>
<div class="t" style="top:476px;font-size:11px;line-height:11px;font-weight:normal;color:#000;right:417px;">512.0</div>
<div class="t" style="top:476px;font-size:11px;line-height:11px;font-weight:normal;color:#000;right:69px;">186846</div>
<div class="t" style="top:476px;font-size:11px;line-height:11px;font-weight:normal;color:#000;right:21px;">194989</div>
<div class="t" style="top:491px;font-size:11px;line-height:11px;font-weight:normal;color:#000;right:417px;">1024.0</div>
<div class="t" style="top:491px;font-size:11px;line-height:11px;font-weight:normal;color:#000;right:69px;">183441</div>
<div class="t" style="top:491px;font-size:11px;line-height:11px;font-weight:normal;color:#000;right:21px;">186846</div>
<div class="t" style="top:505px;font-size:11px;line-height:11px;font-weight:normal;color:#000;right:417px;">2048.0</div>
<div class="t" style="top:505px;font-size:11px;line-height:11px;font-weight:normal;color:#000;right:69px;">173932</div>
<div class="t" style="top:505px;font-size:11px;line-height:11px;font-weight:normal;color:#000;right:21px;">190830</div>
<div class="t" style="top:520px;font-size:11px;line-height:11px;font-weight:normal;color:#000;right:417px;">4096.0</div>
<div class="t" style="top:520px;font-size:11px;line-height:11px;font-weight:normal;color:#000;right:69px;">172074</div>
<div class="t" style="top:520px;font-size:11px;line-height:11px;font-weight:normal;color:#000;right:21px;">194049</div>
<div class="t" style="top:535px;font-size:11px;line-height:11px;font-weight:normal;color:#000;right:417px;">8192.0</div>
<div class="t" style="top:535px;font-size:11px;line-height:11px;font-weight:normal;color:#000;right:69px;">167772</div>
<div class="t" style="top:535px;font-size:11px;line-height:11px;font-weight:normal;color:#000;right:21px;">194989</div>
<div class="t" style="top:558px;font-size:11px;line-height:11px;font-weight:normal;color:#000;left:586px;width:60px;text-align:center;">0</div>
<div class="t" style="top:558px;font-size:11px;line-height:11px;font-weight:normal;color:#000;left:616px;width:60px;text-align:center;">20</div>
<div class="t" style="top:558px;font-size:11px;line-height:11px;font-weight:normal;color:#000;left:646px;width:60px;text-align:center;">40</div>
<div class="t" style="top:558px;font-size:11px;line-height:11px;font-weight:normal;color:#000;left:676px;width:60px;text-align:center;">60</div>
<div class="t" style="top:558px;font-size:11px;line-height:11px;font-weight:normal;color:#000;left:706px;width:60px;text-align:center;">80</div>
<div class="t" style="top:558px;font-size:11px;line-height:11px;font-weight:normal;color:#000;left:736px;width:60px;text-align:center;">100</div>
<div class="t" style="top:558px;font-size:11px;line-height:11px;font-weight:normal;color:#000;left:766px;width:60px;text-align:center;">120</div>
<div class="t" style="top:558px;font-size:11px;line-height:11px;font-weight:normal;color:#000;left:796px;width:60px;text-align:center;">140</div>
<div class="t" style="top:558px;font-size:11px;line-height:11px;font-weight:normal;color:#000;left:826px;width:60px;text-align:center;">160</div>
<div class="t" style="top:558px;font-size:11px;line-height:11px;font-weight:normal;color:#000;left:856px;width:60px;text-align:center;">180</div>
<div class="t" style="top:558px;font-size:11px;line-height:11px;font-weight:normal;color:#000;left:886px;width:60px;text-align:center;">200</div>
<div class="t" style="top:571px;font-size:11px;line-height:11px;font-weight:normal;color:#000;left:700px;transform:scaleX(0.9938);transform-origin:0 0;">Transfer Rate - MB / Sec</div>
<div class="t" style="top:604px;font-size:12px;line-height:12px;font-weight:normal;color:#000;left:565px;transform:scaleX(0.9389);transform-origin:0 0;">For Help, press F1</div>
<div class="ul" style="left:577px;top:115px;width:8px;"></div>
<div class="ul" style="left:628px;top:141px;width:5px;"></div>
<div class="ul" style="left:604px;top:167px;width:6px;"></div>
<div class="ul" style="left:734px;top:141px;width:3px;"></div>
<div class="ul" style="left:825px;top:113px;width:7px;"></div>
<div class="ul" style="left:923px;top:113px;width:3px;"></div>
<div class="ul" style="left:932px;top:135px;width:7px;"></div>
<div class="ul" style="left:913px;top:152px;width:8px;"></div>
<div class="ul" style="left:913px;top:169px;width:8px;"></div>
<div class="ul" style="left:895px;top:193px;width:8px;"></div>
<div class="ul" style="left:627px;top:216px;width:6px;"></div>
</body></html>
